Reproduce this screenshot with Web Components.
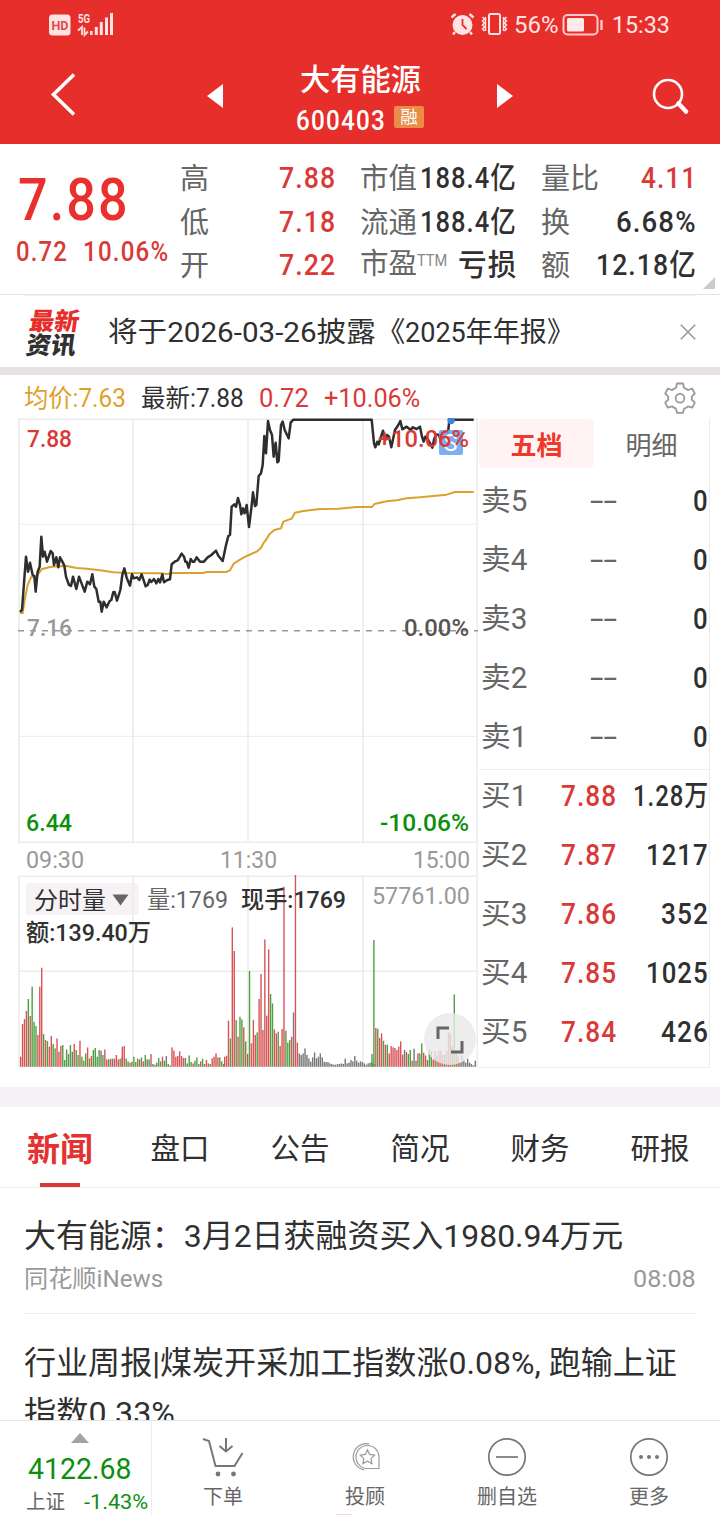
<!DOCTYPE html>
<html lang="zh-CN">
<head>
<meta charset="utf-8">
<title>大有能源 600403</title>
<style>
html,body{margin:0;padding:0;background:#fff}
body{width:720px;height:1515px;overflow:hidden;font-family:Roboto,"Noto Sans CJK SC",sans-serif;color:#303030}
</style>
</head>
<body>
<stock-app></stock-app>
<script>
const define = (name, html, setup) => customElements.define(name, class extends HTMLElement {
  connectedCallback() {
    if (this.shadowRoot) return;
    const t = document.createElement('template');
    t.innerHTML = html;
    this.attachShadow({mode: 'open'}).appendChild(t.content.cloneNode(true));
    if (setup) setup(this, this.shadowRoot);
  }
});

define('stock-app', `
<style>
:host{display:flex;flex-direction:column;height:1515px;width:720px;overflow:hidden;background:#fff}
.trade{display:grid;grid-template-columns:478px 232px;height:650px}
.sep{height:8px;background:#e4e0e4;flex:none}
.band{height:20px;margin-top:19px;background:#f6f2f6;flex:none}
news-list{flex:1;min-height:0}
</style>
<status-bar></status-bar>
<title-bar></title-bar>
<quote-panel></quote-panel>
<notice-bar></notice-bar>
<div class="sep"></div>
<chart-legend></chart-legend>
<div class="trade"><trend-chart></trend-chart><order-book></order-book></div>
<div class="band"></div>
<info-tabs></info-tabs>
<news-list></news-list>
<bottom-bar></bottom-bar>`);

define('status-bar', `
<style>
:host{display:flex;height:48px;background:#e62e2b;color:#ffe3e4;align-items:center;box-sizing:border-box;padding:0 50px 0 49px;flex:none;font-size:24px;line-height:48px}
.sp{flex:1}
svg{display:block}
fit-text{position:relative;top:1px}
</style>
<svg width="70" height="48" viewBox="49 0 70 48"><rect x="49" y="14.500" width="21.500" height="21" rx="3.500" fill="#ffe3e4"/>
<text x="51.500" y="30" font-size="13.500" font-weight="700" fill="#e04a49" textLength="17" lengthAdjust="spacingAndGlyphs">HD</text>
<text x="78" y="23" font-size="13.500" font-weight="700" fill="#ffe3e4" textLength="12" lengthAdjust="spacingAndGlyphs">5G</text>
<path d="M78 30.500l4-3.500v8M84.500 27.500V35l3.500-3.500" fill="none" stroke="#ffe3e4" stroke-width="1.800"/>
<path d="M90 31h2.600v4H90zM94.800 27h3v8h-3zM99.800 22h3v13h-3zM105 17.500h3V35h-3zM110 13h3v22h-3z" fill="#ffe3e4"/></svg>
<span class="sp"></span>
<svg width="64" height="48" viewBox="449 0 64 48"><circle cx="462.500" cy="25" r="10" fill="#ffe3e4"/><path d="M451.500 17.500l4-3.500M473.500 17.500l-4-3.500M455 32l-2 2.500M470 32l2 2.500" stroke="#ffe3e4" stroke-width="2.400" fill="none"/><path d="M462.500 19v6l4 4" stroke="#e62e2b" stroke-width="1.800" fill="none"/>
<rect x="489" y="14" width="11" height="20" rx="1.500" fill="none" stroke="#ffe3e4" stroke-width="2"/><path d="M482.500 17l2 2-2 2 2 2-2 2 2 2-2 2 2 2M485.500 17v14M506.500 17l-2 2 2 2-2 2 2 2-2 2 2 2-2 2M503.500 17v14" fill="none" stroke="#ffe3e4" stroke-width="1.500"/></svg>
<fit-text w="45" style="margin-left:1px">56%</fit-text>
<svg width="42" height="48" viewBox="562 0 42 48" style="margin-left:3px;margin-right:8px"><rect x="563.500" y="15" width="34" height="19.500" rx="4" fill="none" stroke="#ffc9ca" stroke-width="2"/><rect x="567" y="18" width="17" height="13.500" rx="1.500" fill="#ffe9ea"/><path d="M601.500 20v10" stroke="#ffc9ca" stroke-width="2.400"/></svg>
<fit-text w="58">15:33</fit-text>`);

define('title-bar', `
<style>
:host{display:grid;grid-template-columns:200px 320px 200px;height:96px;background:#e62e2b;color:#fff;flex:none}
svg{display:block}
.mid{display:grid;grid-template-columns:30px 1fr 30px}
.name{text-align:center;font-size:30px;font-weight:500;line-height:40px;height:45px;padding-top:12px;box-sizing:border-box}
.code{display:flex;justify-content:center;height:51px;font-size:28px;font-weight:500;line-height:30px;gap:8px;align-items:flex-start;padding-top:13px;box-sizing:border-box}
.code fit-text{letter-spacing:.05em}
.tag{width:30px;height:22px;border-radius:2px;background:#e98d49;font-size:17.500px;font-weight:400;line-height:23px;text-align:center}
</style>
<svg width="200" height="96" viewBox="0 48 200 96"><path d="M74 74.500L53.500 94.500L74 114.500" fill="none" stroke="#fff" stroke-width="3.600"/></svg>
<div class="mid">
<svg width="30" height="96" viewBox="200 48 30 96"><path d="M207 96l16-12v24z" fill="#fff"/></svg>
<div><div class="name"><fit-text w="121">大有能源</fit-text></div><div class="code"><fit-text w="90">600403</fit-text><span class="tag">融</span></div></div>
<svg width="30" height="96" viewBox="490 48 30 96"><path d="M513 96l-16-12v24z" fill="#fff"/></svg>
</div>
<svg width="200" height="96" viewBox="520 48 200 96"><circle cx="668" cy="94" r="14" fill="none" stroke="#fff" stroke-width="2.600"/><path d="M678.500 103.500l7.500 8" stroke="#fff" stroke-width="4.500" stroke-linecap="round"/></svg>`);

define('quote-panel', `
<style>
:host{display:grid;grid-template-columns:180px 540px;height:151px;background:#fff;position:relative;flex:none;border-bottom:1px solid #e4e4e4;box-sizing:border-box;color:#303030}
.price{font-size:60px;font-weight:500;color:#ea302d;line-height:60px;padding:26px 0 0 18px;height:92px;box-sizing:border-box;letter-spacing:.04em}
.chg{display:flex;gap:15px;padding-left:16px;font-size:28px;font-weight:500;color:#d93a37;line-height:32px;letter-spacing:.05em}
.cols{display:grid;grid-template-columns:156px 157px 156px;column-gap:24px;grid-auto-rows:43.600px;padding-top:12px;height:138px;box-sizing:border-box}
.c{display:flex;justify-content:space-between;align-items:center;font-size:30px;line-height:43px;white-space:nowrap}
.c>:first-child{color:#666;font-size:29px;position:relative;top:2px}
.c>:last-child{font-weight:500;letter-spacing:.04em}
.c>.r{color:#d93a37}
.sup{font-size:17px;position:relative;top:-8px;color:#888}
.corner{position:absolute;right:5px;bottom:5px;width:0;height:0;border-left:12px solid transparent;border-bottom:12px solid #ccc}
</style>
<div><div class="price"><fit-text w="112">7.88</fit-text></div><div class="chg"><fit-text w="52">0.72</fit-text><fit-text w="86">10.06%</fit-text></div></div>
<div class="cols">
<div class="c"><span>高</span><fit-text class="r" w="57">7.88</fit-text></div><div class="c"><fit-text w="57">市值</fit-text><fit-text w="97">188.4亿</fit-text></div><div class="c"><fit-text w="58">量比</fit-text><fit-text class="r" w="56">4.11</fit-text></div>
<div class="c"><span>低</span><fit-text class="r" w="57">7.18</fit-text></div><div class="c"><fit-text w="57">流通</fit-text><fit-text w="97">188.4亿</fit-text></div><div class="c"><span>换</span><fit-text w="81">6.68%</fit-text></div>
<div class="c"><span>开</span><fit-text class="r" w="57">7.22</fit-text></div><div class="c"><span><fit-text w="57">市盈</fit-text><fit-text class="sup" w="30">TTM</fit-text></span><fit-text w="59">亏损</fit-text></div><div class="c"><span>额</span><fit-text w="101">12.18亿</fit-text></div>
</div>
<i class="corner"></i>`);

define('notice-bar', `
<style>
:host{display:flex;height:72px;flex:none;align-items:center;margin:0 24px;border-top:1px solid #f0f0f0;box-sizing:border-box;color:#303030}
.logo{width:52px;margin-left:4px;font-family:"Noto Sans CJK SC",sans-serif;font-weight:900;font-size:24.500px;line-height:24px;transform:skewX(-8deg);margin-top:1px}
.logo b{display:block;color:#e62e2b;font-weight:900}
.t{font-size:28px;line-height:40px;margin-left:28px;flex:1;margin-top:3px;white-space:nowrap}
</style>
<div class="logo"><b><fit-text w="50">最新</fit-text></b><fit-text w="50">资讯</fit-text></div>
<div class="t"><fit-text w="297">将于2026-03-26披露《</fit-text><fit-text w="169">2025年年报》</fit-text></div>
<svg width="16" height="16" viewBox="0 0 16 16"><path d="M.8.800l14.400 14.400M15.200.8L.8 15.200" stroke="#999" stroke-width="1.600"/></svg>`);

define('chart-legend', `
<style>
:host{display:flex;height:43px;flex:none;align-items:center;padding:0 24px;font-size:25px;line-height:43px;gap:15px;box-sizing:border-box;color:#303030}
fit-text{position:relative;top:1.500px}
.a{color:#e0a12a}.r{color:#d93a37}
svg{margin-left:auto}
</style>
<fit-text class="a" w="102">均价:7.63</fit-text><fit-text w="103">最新:7.88</fit-text><fit-text class="r" w="50">0.72</fit-text><fit-text class="r" w="96">+10.06%</fit-text>
<svg width="32" height="32" viewBox="0 0 32 32" style="margin-top:3px" fill="none" stroke="#999" stroke-width="1.800" stroke-linejoin="round"><path d="M13 1.500h6l1 4.300q2.200.8 4 2.200l4.200-1.400 2.600 5-3.100 3.100q.3 1.600 0 3l3.100 3-2.600 5-4.200-1.400q-1.700 1.500-4 2.300l-1 4.200h-6l-1-4.200q-2.200-.8-4-2.300l-4.200 1.400-2.600-5 3.100-3q-.3-1.500 0-3l-3.100-3.100 2.600-5L8 8q1.800-1.400 4-2.200z"/><circle cx="16" cy="16.200" r="4.400"/></svg>`);

const price = '60,711 66,704 78,545 84,590 90,563 98,600 103,603 107,650 113,590 119,575 124,485 129,545 134,530 141,560 152,528 158,535 162,570 169,547 175,577 180,547 187,560 193,572 198,605 207,630 213,633 219,605 229,642 237,605 254,650 262,620 270,628 277,598 283,635 289,642 296,680 301,680 305,710 311,680 320,697 329,678 334,675 340,651 344,651 351,677 361,645 367,600 373,580 380,608 390,632 396,598 401,610 411,607 418,615 425,598 437,634 443,630 449,614 454,621 462,612 469,625 475,612 480,622 487,598 492,622 502,615 510,613 515,568 526,559 533,556 545,536 552,545 556,560 560,560 566,578 572,552 578,560 583,560 590,547 600,560 612,560 622,548 634,540 648,527 655,542 668,558 677,515 685,483 690,480 695,395 703,388 708,395 714,369 720,390 724,418 729,400 734,415 740,390 747,456 754,400 759,352 765,393 769,390 776,303 783,295 788,270 793,183 798,235 804,138 810,165 816,180 821,245 827,203 832,262 836,258 843,150 848,140 854,165 866,190 872,143 880,134 1115,134 1122,205 1126,217 1132,200 1136,208 1149,167 1156,195 1161,180 1167,185 1174,217 1185,165 1195,150 1201,138 1207,163 1220,155 1232,165 1238,157 1250,162 1260,155 1266,185 1271,200 1276,185 1282,190 1297,218 1303,190 1310,178 1317,180 1322,195 1330,185 1342,195 1347,145 1360,134 1421,134';
const average = '60,714 68,714 75,670 83,630 93,607 110,603 125,583 150,576 175,574 200,573 230,579 260,581 300,586 340,592 380,594 480,595 500,597 520,594 610,594 618,591 678,591 690,586 702,565 720,554 740,543 770,530 782,520 792,502 798,495 808,478 823,465 843,460 850,440 875,431 885,413 910,408 960,402 1015,401 1070,396 1116,396 1123,387 1160,379 1190,376 1220,370 1260,367 1300,363 1340,359 1365,351 1421,351';
/* Each session segment: first bar's x, then height and direction (r up, g down, k flat). */
const volume = [
 [62,'30r 128r 143r 167r 203g 152r 240g 135g 122g 95r 240r 297r 98g 80r 77g 60r 92r 68g 55g 85r 45r 62r 65g 20g 52g 38g 65g 45k 68r 50g 35g 78r 30g 18g 40g 58r 25g 32r 50g 56g 30g 50g 48k 35g 52r 22r 22g 24r 24k 24r 35r 22r 24g 28r'],
 [367,'60r 62r 25g 16g 12g 15r 30g 14g 24g 22r 28g 16r 35g 22k 22g 38r 8k 6g 12k 26g 16g 30r 18g 32k 8g 4g'],
 [516,'58r 48r 30r 32r 46r 32r 26r 26k 10g 34g 14g 10r 18g 28g 8g 16r 24g 8r 20r 10g 8g 25r 30r 40r 28r 28g 16g 8r'],
 [674,'30r 33r 138r 85g 418r 347r 140g 90r 150g 142g 118r 76g 38r 287g 70r 140r 95r 103g 203r 278r 110r 382r 153r 352r 218g 190g 112r 100r 105g 62r 113r 540r 108g 72g 80g 90r 163k 575r 72r 40k 35k 40k 55k 35k 25k 15k 28k 43k 25k 30k 40k 28k 15k 14k 14k 10k 8k 6k 6k 8k 8k 10k 8k 24k 10k 12k 20k 16k 32k 18k 12k 16k 14k 10k 6k 10k 12k 14k 8k'],
 [1116,'38g 380g 116r 114g 86r 100r 78g 66r 66g 40r 62r 58r 56r 50r 60r 76r 36r 50k 44r 38g 50g 18r 54k 18g 40r 40g 70g 42r 34r 20k 52g 46g 22r 46r 34g 48r 48r 36r 36g 46r 105r 98r 60g 217g 46r 30r 14k 34k 20k 12k 24k 12k 8k 4k 18k']
];
define('trend-chart', `
<style>
:host{display:block;position:relative;height:650px}
svg{display:block}
.g{fill:none;stroke:#ececec;stroke-width:1.600}
text{font-size:23.500px}
.m{font-weight:500}
.zoom{position:absolute;left:424px;top:595px;width:52px;height:52px;border-radius:50%;background:rgba(233,233,233,.82);display:flex;align-items:center;justify-content:center}
</style>
<svg width="478" height="650" viewBox="0 418 478 650">
<path class="g" d="M18 419.300h460M18 842.300h460M18 876.300h460M18 1066.500h460M18 971.300h460M19 418.500v424M19 876v191M133 419v423M133 876v191M248 419v423M248 876v191M363 419v423M363 876v191M477.300 419v648"/>
<path class="g" d="M18 524.300h460M18 736.300h460" style="stroke-width:1"/>
<path d="M18 630.700h460" fill="none" stroke="#999" stroke-width="1.500" stroke-dasharray="6 6"/>
<g class="bars"></g>
<text class="m" x="27" y="636" fill="#999" textLength="45" lengthAdjust="spacingAndGlyphs">7.16</text>
<text class="m" x="404" y="636" fill="#555" textLength="65" lengthAdjust="spacingAndGlyphs">0.00%</text>
<g transform="translate(0 375) scale(.33333)" fill="none" stroke-linejoin="round"><polyline points="${average}" stroke="#dca02c" stroke-width="6"/><polyline points="${price}" stroke="#2e2e2e" stroke-width="7.500"/></g>
<rect x="439" y="430" width="24" height="25" rx="2" fill="#72a8f3" opacity=".92"/><text x="443.500" y="451" fill="#fff" textLength="14" lengthAdjust="spacingAndGlyphs">S</text><circle cx="451" cy="420.500" r="3.700" fill="#3f83dc"/>
<text class="m" x="27" y="447" fill="#d93a37" textLength="45" lengthAdjust="spacingAndGlyphs">7.88</text>
<text class="m" x="378" y="447" fill="#d93a37" textLength="91" lengthAdjust="spacingAndGlyphs">+10.06%</text>
<text class="m" x="26" y="831" fill="#0d8f0d" textLength="46" lengthAdjust="spacingAndGlyphs">6.44</text>
<text class="m" x="380" y="831" fill="#0d8f0d" textLength="89" lengthAdjust="spacingAndGlyphs">-10.06%</text>
<g fill="#999"><text x="26" y="868" textLength="58" lengthAdjust="spacingAndGlyphs">09:30</text><text x="220" y="868" textLength="57" lengthAdjust="spacingAndGlyphs">11:30</text><text x="413" y="868" textLength="57" lengthAdjust="spacingAndGlyphs">15:00</text>
<text x="372" y="904" textLength="98" lengthAdjust="spacingAndGlyphs">57761.00</text></g>
<rect x="26" y="883" width="113" height="32" rx="3" fill="#f6f2f6"/><path d="M133 883v32" stroke="#ececec" stroke-width="1.600"/>
<text x="34" y="908.500" fill="#303030" textLength="72" lengthAdjust="spacingAndGlyphs">分时量</text><path d="M112.500 894.500h16l-8 11z" fill="#666"/>
<text x="147" y="908" fill="#666" textLength="81" lengthAdjust="spacingAndGlyphs">量:1769</text>
<text class="m" x="241" y="908" fill="#303030" textLength="105" lengthAdjust="spacingAndGlyphs">现手:1769</text>
<text class="m" x="26" y="941" fill="#303030" textLength="125" lengthAdjust="spacingAndGlyphs">额:139.40万</text>
</svg>
<div class="zoom"><svg width="30" height="30" viewBox="0 0 30 30"><path d="M3 15V4h11M16 28h11V17" fill="none" stroke="#666" stroke-width="3"/></svg></div>`, (el, root) => {
  const color = {r: '#d95355', g: '#4f9f42', k: '#777777'};
  let out = '';
  for (const [x0, list] of volume) list.split(' ').forEach((s, i) => {
    const h = parseFloat(s) / 3, x = (x0 + i * 5.74) / 3 - .7;
    out += `<rect x="${x.toFixed(2)}" y="${(1066.7 - h).toFixed(1)}" width="1.4" height="${h.toFixed(1)}" fill="${color[s.slice(-1)]}"/>`;
  });
  root.querySelector('.bars').innerHTML = out;
});

define('order-book', `
<style>
:host{display:flex;flex-direction:column;height:650px;border-right:1px solid #ececec;border-bottom:1px solid #ececec;box-sizing:border-box;margin-left:1px;position:relative}
.tabs{display:grid;grid-template-columns:115px 1fr;height:49px;line-height:54px;text-align:center;font-size:26px;color:#666;margin-top:1px;flex:none}
.tabs .on{background:#fff3f3;border-radius:5px;color:#f0372c;font-weight:700}
.tabs span{height:49px}
.rows{padding-top:4px}
.row{display:grid;grid-template-columns:49px 87px 1fr;height:59px;align-items:center;font-size:29px;line-height:59px;padding-left:2px;color:#666;flex:none;justify-items:end}
.row>:first-child{justify-self:start}
.v{color:#303030;font-weight:500;letter-spacing:.04em}.p{color:#d93a37;font-weight:500;letter-spacing:.04em}
.line{height:1px;background:#ececec;position:absolute;left:0;right:0;top:351px}
</style>
<div class="tabs"><span class="on">五档</span><span>明细</span></div><div class="rows"></div><div class="line"></div>`, (el, root) => {
  const rows = [['卖5'],['卖4'],['卖3'],['卖2'],['卖1'],['买1','7.88','1.28万',76],['买2','7.87','1217',63],['买3','7.86','352',48],['买4','7.85','1025',63],['买5','7.84','426',48]];
  root.querySelector('.rows').innerHTML = rows.map(([n, p, v, w]) => `<div class="row"><fit-text w="46">${n}</fit-text>${p ? `<fit-text class="p" w="56">${p}</fit-text><fit-text class="v" w="${w}">${v}</fit-text>` : '<fit-text w="27">--</fit-text><fit-text class="v" w="16">0</fit-text>'}</div>`).join('');
});

define('info-tabs', `
<style>
:host{display:grid;grid-template-columns:repeat(6,120px);height:81px;flex:none;border-bottom:1px solid #ececec;box-sizing:border-box;text-align:center;font-size:29.500px;line-height:85px;color:#303030}
.on{position:relative;height:80px;font-size:33px;font-weight:700;line-height:86px;color:#e3322f}
.on::after{content:"";position:absolute;left:40px;width:40px;bottom:0;height:4px;background:#d93a37}
</style>
<div class="on">新闻</div><div>盘口</div><div>公告</div><div>简况</div><div>财务</div><div>研报</div>`);

define('news-list', `
<style>
:host{display:block;overflow:hidden;padding:0 24px;color:#303030}
h3{margin:0;font-weight:400;font-size:32px;line-height:50px;height:50px}
.n{height:126px;border-bottom:1px solid #ececec;padding-top:23px;box-sizing:border-box}
.m{display:flex;justify-content:space-between;font-size:24px;line-height:36px;color:#999}
.l{padding-top:24px}
</style>
<div class="n"><h3><fit-text w="599">大有能源：3月2日获融资买入1980.94万元</fit-text></h3><div class="m"><fit-text w="139">同花顺iNews</fit-text><fit-text w="63">08:08</fit-text></div></div>
<div class="l"><h3><fit-text w="653">行业周报|煤炭开采加工指数涨0.08%, 跑输上证</fit-text></h3><h3><fit-text w="151">指数0.33%</fit-text></h3></div>`);

define('bottom-bar', `
<style>
:host{display:grid;grid-template-columns:152px repeat(4,142px);height:95px;border-top:1px solid #e6e6e6;box-sizing:border-box;flex:none;background:#fff;position:relative;color:#666}
.idx{border-right:1px solid #ececec;padding:12px 3px 0 28px;box-sizing:border-box;color:#0d8f0d;overflow:hidden;height:94px}
.up{display:block;margin:0 0 9px 43px}
.big{display:block;font-size:29px;line-height:34px}
.s{display:flex;justify-content:space-between;font-size:20px;line-height:28px;margin-top:2px;margin-left:-2px}
.s :first-child{color:#666}
.it{display:flex;flex-direction:column;align-items:center;font-size:20px;line-height:28px;padding-top:15px}
.it svg{margin-bottom:5px}
.dot{position:absolute;left:336px;bottom:0;width:16px;height:1px;background:#fbd5d5}
</style>
<div class="idx"><svg class="up" width="18" height="10"><path d="M9 0l9 10H0z" fill="#a5a2a5"/></svg><fit-text class="big" w="103">4122.68</fit-text><div class="s"><fit-text w="39">上证</fit-text><fit-text w="64">-1.43%</fit-text></div></div>
<div class="it"><svg width="42" height="42" viewBox="202 1436 42 42" fill="none" stroke="#777" stroke-width="2"><path d="M203 1439l6 2 6.500 25h19l8-13M226 1438v13M219.500 1446l6.500 5.500 6.500-5.500"/><g fill="#777" stroke="none"><circle cx="218" cy="1474" r="2.400"/><circle cx="233.500" cy="1474" r="2.400"/></g></svg><fit-text w="40">下单</fit-text></div>
<div class="it"><svg width="42" height="42" viewBox="344 1436 42 42" fill="none" stroke="#999" stroke-width="1.200"><path d="M379 1468.500h-11.500a11.500 11.500 0 1 1 11.500-11.500z"/><path d="M364 1469.800a13.200 13.200 0 1 1 5-26"/><path d="M367.400 1449.800l2.200 4.600 5 .7-3.600 3.500.9 5-4.500-2.400-4.500 2.400.9-5-3.600-3.500 5-.7z"/></svg><fit-text w="40">投顾</fit-text></div>
<div class="it"><svg width="42" height="42" viewBox="0 0 42 42" fill="none" stroke="#777" stroke-width="1.700"><circle cx="21" cy="21" r="18.200"/><path d="M10 21h22"/></svg><fit-text w="60">删自选</fit-text></div>
<div class="it"><svg width="42" height="42" viewBox="0 0 42 42" fill="#777"><circle cx="21" cy="21" r="18.200" fill="none" stroke="#777" stroke-width="1.700"/><circle cx="13" cy="21" r="2"/><circle cx="21" cy="21" r="2"/><circle cx="29" cy="21" r="2"/></svg><fit-text w="40">更多</fit-text></div>
<i class="dot"></i>`);

/* One line of text condensed or widened to the width given in its w attribute. */
define('fit-text', `<style>:host{display:inline-block;white-space:nowrap;text-align:left}span{display:inline-block;transform-origin:0 50%}</style><span><slot></slot></span>`, (el, root) => {
  const w = +el.getAttribute('w'), span = root.querySelector('span');
  const natural = span.offsetWidth;
  el.style.width = w + 'px';
  if (natural) span.style.transform = `scaleX(${w / natural})`;
});
</script>
</body>
</html>
